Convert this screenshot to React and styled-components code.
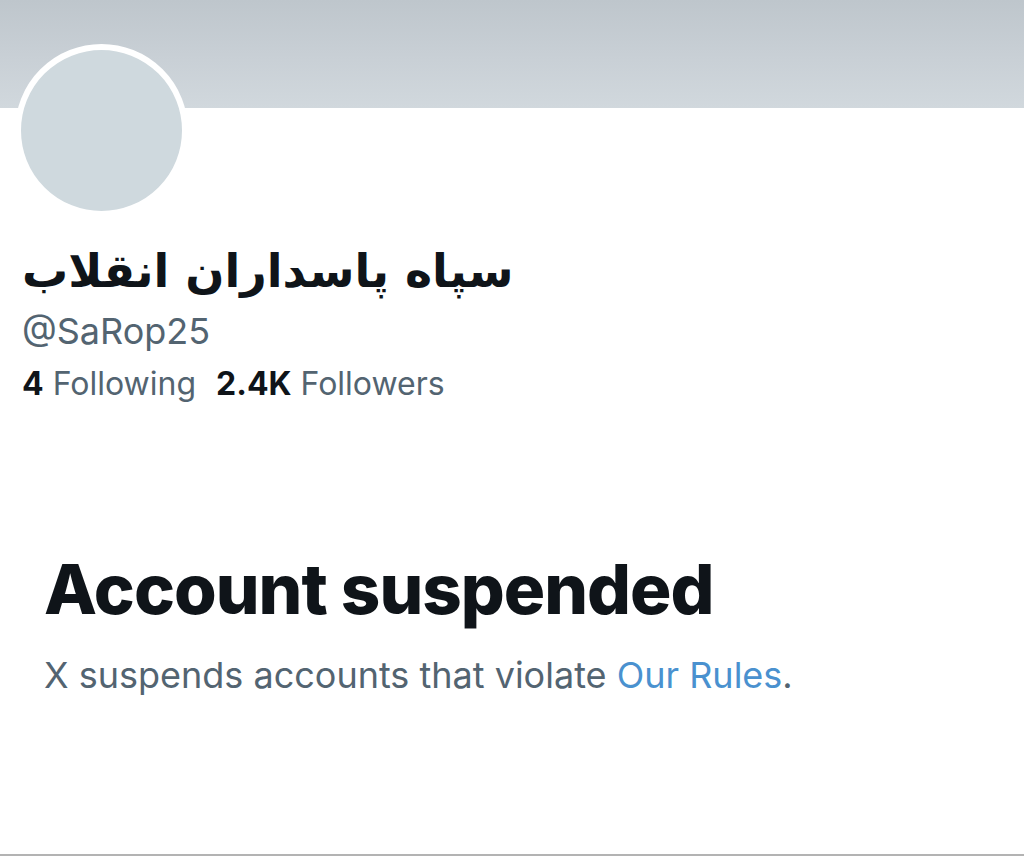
import React from 'react';
import styled, { createGlobalStyle } from 'styled-components';

const GlobalStyle = createGlobalStyle`
  html, body {
    margin: 0;
    padding: 0;
    background: #ffffff;
  }
  body {
    font-family: Inter, "Noto Sans", "DejaVu Sans", sans-serif;
  }
`;

const Page = styled.div`
  width: 1024px;
  height: 856px;
  box-sizing: border-box;
  border-bottom: 2px solid #b3b3b3;
  overflow: hidden;
  background: #ffffff;
`;

const Banner = styled.div`
  height: 108px;
  background: linear-gradient(180deg, #bec6cc 0%, #c8cfd5 50%, #d1d8dd 100%);
`;

const Avatar = styled.div`
  width: 161px;
  height: 161px;
  margin: -64px 0 0 15px;
  border: 6px solid #ffffff;
  border-radius: 50%;
  background: #cfd9de;
`;

const Profile = styled.div`
  padding: 0 22px;
  display: flex;
  flex-direction: column;
`;

const Name = styled.h1`
  margin: 22px 0 0;
  font-family: "DejaVu Sans", sans-serif;
  font-weight: 700;
  font-size: 46px;
  line-height: 64px;
  color: #0f1419;
  direction: rtl;
  align-self: flex-start;
`;

const Handle = styled.div`
  margin-top: 4px;
  font-size: 36px;
  line-height: 48px;
  color: #536471;
`;

const Stats = styled.div`
  display: flex;
  gap: 20px;
  margin-top: 7px;
  font-size: 32px;
  line-height: 44px;
  color: #536471;
`;

const Stat = styled.span`
  b {
    font-weight: 700;
    color: #0f1419;
  }
`;

const Notice = styled.div`
  padding: 141px 44px 0;
`;

const Title = styled.h2`
  margin: 0;
  font-weight: 800;
  font-size: 69px;
  line-height: 84px;
  letter-spacing: -1px;
  color: #0f1419;
`;

const Message = styled.p`
  margin: 21px 0 0;
  font-size: 36px;
  line-height: 46px;
  color: #536471;

  a {
    color: #4a91cf;
    text-decoration: none;
  }
`;

export default function App() {
  return (
    <Page>
      <GlobalStyle />
      <Banner />
      <Avatar />
      <Profile>
        <Name>سپاه پاسداران انقلاب</Name>
        <Handle>@SaRop25</Handle>
        <Stats>
          <Stat><b>4</b> Following</Stat>
          <Stat><b>2.4K</b> Followers</Stat>
        </Stats>
      </Profile>
      <Notice>
        <Title>Account suspended</Title>
        <Message>
          X suspends accounts that violate <a href="#rules">Our Rules</a>.
        </Message>
      </Notice>
    </Page>
  );
}
